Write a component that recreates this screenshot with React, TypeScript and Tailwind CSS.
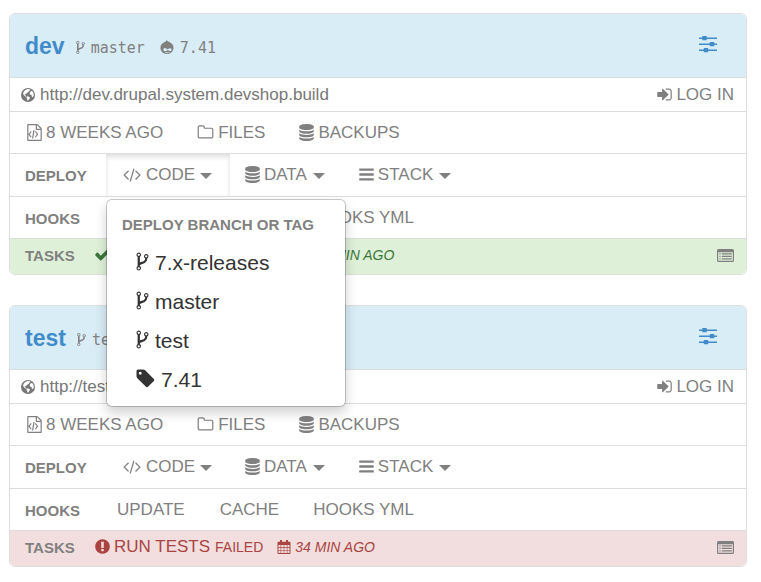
import React from "react";

const paths = {
  fork: "M672 1472q0-40-28-68t-68-28-68 28-28 68 28 68 68 28 68-28 28-68zm0-1152q0-40-28-68t-68-28-68 28-28 68 28 68 68 28 68-28 28-68zm640 128q0-40-28-68t-68-28-68 28-28 68 28 68 68 28 68-28 28-68zm96 0q0 52-26 96.500t-70 69.500q-2 287-226 414-67 38-203 81-128 40-169.500 71t-41.500 100v26q44 25 70 69.500t26 96.500q0 80-56 136t-136 56-136-56-56-136q0-52 26-96.500t70-69.500v-820q-44-25-70-69.500t-26-96.500q0-80 56-136t136-56 136 56 56 136q0 52-26 96.500t-70 69.500v497q54-26 154-57 55-17 87.500-29.500t70.500-31 59-39.500 40.500-51 28-69.500 8.500-91.500q-44-25-70-69.500t-26-96.500q0-80 56-136t136-56 136 56 56 136z",
  database: "M896 768q237 0 443-43t325-127v170q0 69-103 128t-280 93.500-385 34.500-385-34.500-280-93.500-103-128v-170q119 84 325 127t443 43zm0 768q237 0 443-43t325-127v170q0 69-103 128t-280 93.500-385 34.500-385-34.500-280-93.500-103-128v-170q119 84 325 127t443 43zm0-384q237 0 443-43t325-127v170q0 69-103 128t-280 93.500-385 34.500-385-34.500-280-93.500-103-128v-170q119 84 325 127t443 43zm0-1152q208 0 385 34.500t280 93.500 103 128v128q0 69-103 128t-280 93.500-385 34.500-385-34.500-280-93.500-103-128v-128q0-69 103-128t280-93.500 385-34.500z",
  bars: "M1664 1344v128q0 26-19 45t-45 19h-1408q-26 0-45-19t-19-45v-128q0-26 19-45t45-19h1408q26 0 45 19t19 45zm0-512v128q0 26-19 45t-45 19h-1408q-26 0-45-19t-19-45v-128q0-26 19-45t45-19h1408q26 0 45 19t19 45zm0-512v128q0 26-19 45t-45 19h-1408q-26 0-45-19t-19-45v-128q0-26 19-45t45-19h1408q26 0 45 19t19 45z",
  tag: "M576 448q0-53-37.500-90.500t-90.500-37.500-90.500 37.500-37.500 90.500 37.500 90.500 90.500 37.500 90.500-37.500 37.500-90.500zm1067 576q0 53-37 90l-491 492q-39 37-91 37-53 0-90-37l-715-716q-38-37-64.500-101t-26.500-117v-416q0-52 38-90t90-38h416q53 0 117 26.500t102 64.500l715 714q37 39 37 91z",
  signIn: "M1312 896q0 26-19 45l-544 544q-19 19-45 19t-45-19-19-45v-288h-448q-26 0-45-19t-19-45v-384q0-26 19-45t45-19h448v-288q0-26 19-45t45-19 45 19l544 544q19 19 19 45zm352-352v704q0 119-84.500 203.500t-203.500 84.500h-320q-13 0-22.500-9.500t-9.500-22.500q0-4-1-20t-.5-26.500 3-23.500 10-19.500 20.500-6.500h320q66 0 113-47t47-113v-704q0-66-47-113t-113-47h-312l-11.500-1-11.500-3-8-5.500-7-9-2-13.500q0-4-1-20t-.5-26.500 3-23.500 10-19.500 20.500-6.500h320q119 0 203.500 84.500t84.500 203.500z",
  folder: "M1600 1312v-704q0-40-28-68t-68-28h-704q-40 0-68-28t-28-68v-64q0-40-28-68t-68-28h-320q-40 0-68 28t-28 68v960q0 40 28 68t68 28h1216q40 0 68-28t28-68zm128-704v704q0 92-66 158t-158 66h-1216q-92 0-158-66t-66-158v-960q0-92 66-158t158-66h320q92 0 158 66t66 158v32h672q92 0 158 66t66 158z",
  code: "M681 1399l-50 50q-10 10-23 10t-23-10l-466-466q-10-10-10-23t10-23l466-466q10-10 23-10t23 10l50 50q10 10 10 23t-10 23l-393 393 393 393q10 10 10 23t-10 23zm591-1067l-373 1291q-4 13-15.500 19.500t-23.500 2.500l-62-17q-13-4-19.500-15.500t-2.500-24.500l373-1291q4-13 15.500-19.500t23.500-2.500l62 17q13 4 19.500 15.500t2.500 24.500zm657 651l-466 466q-10 10-23 10t-23-10l-50-50q-10-10-10-23t10-23l393-393-393-393q-10-10-10-23t10-23l50-50q10-10 23-10t23 10l466 466q10 10 10 23t-10 23z",
  fileCode: "M1596 380q28 28 48 76t20 88v1152q0 40-28 68t-68 28h-1344q-40 0-68-28t-28-68v-1600q0-40 28-68t68-28h896q40 0 88 20t76 48zm-444-244v376h376q-10-29-22-41l-313-313q-12-12-41-22zm384 1528v-1024h-416q-40 0-68-28t-28-68v-416h-768v1536h1280zm-1056-896q8-11 21-12.500t24 6.500l51 38q11 8 12.500 21t-6.500 24l-182 243 182 243q8 11 6.500 24t-12.500 21l-51 38q-11 8-24 6.500t-21-12.500l-226-301q-14-19 0-38zm802 301q14 19 0 38l-226 301q-8 11-21 12.500t-24-6.500l-51-38q-11-8-12.500-21t6.500-24l182-243-182-243q-8-11-6.500-24t12.500-21l51-38q11-8 24-6.500t21 12.500zm-620 461q-13-2-20.500-13t-5.500-24l138-831q2-13 13-20.500t24-5.500l63 10q13 2 20.500 13t5.500 24l-138 831q-2 13-13 20.500t-24 5.500z",
  check: "M1671 566q0 40-28 68l-724 724-136 136q-28 28-68 28t-68-28l-136-136-362-362q-28-28-28-68t28-68l136-136q28-28 68-28t68 28l294 295 656-657q28-28 68-28t68 28l136 136q28 28 28 68z",
  alert: "M896 128q209 0 385.500 103t279.500 279.500 103 385.500-103 385.500-279.500 279.500-385.500 103-385.500-103-279.500-279.500-103-385.500 103-385.500 279.500-279.500 385.500-103zm128 1247v-190q0-14-9-23.500t-22-9.500h-192q-13 0-23 10t-10 23v190q0 13 10 23t23 10h192q13 0 22-9.500t9-23.500zm-2-344l18-621q0-12-10-18-10-8-24-8h-220q-14 0-24 8-10 6-10 18l17 621q0 10 10 17.500t24 7.500h185q14 0 23.500-7.500t10.500-17.500z",
};

function Icon({ d, className, box = "0 0 1792 1792" }: { d: string; className: string; box?: string }) {
  return (
    <svg viewBox={box} className={`shrink-0 fill-current ${className}`} aria-hidden="true">
      <path d={d} />
    </svg>
  );
}

function Globe() {
  return (
    <svg viewBox="0 0 14 14" className="size-[14px] shrink-0" aria-hidden="true">
      <circle cx="7" cy="7" r="7" className="fill-current" />
      <path
        fill="white"
        d="M6.600 1.100l2.200.1.700.7-1 .6-.7 1.200-1.100.5-.6 1-1.100.2-.2.900-1-.1.200 1.100 1 .5.400.9-1-.2L2.700 7l-.6-1.700.7-1.800 1.600-1.500zM9.700 3.300l1.500-.2 1.300 2 .3 2.300-1.100 1.800-.9-.7-.2-1.500-1.300-.3-.7-1.500zM5.800 8.500l1.700.1 1.600 1.200-.8 1.300-1.200 1.500-.8-.2-.1-1.600-.8-1.200z"
      />
    </svg>
  );
}

function Drupal() {
  return (
    <svg viewBox="0 0 14 14" className="size-[14px] shrink-0" aria-hidden="true">
      <path className="fill-current" d="M6.700 0c.6 1.100 1.700 1.500 3.100 2.300 2 1.100 3.700 2.700 3.700 5.400 0 3.600-2.900 6.300-6.600 6.300S.4 11.400.4 7.800c0-2.900 2-4.500 4-5.500C5.600 1.700 6.400 1.200 6.700 0z" />
      <path fill="#d9edf7" d="M4.200 8.200c1.500-.4 2.300.8 3.300 1.200 1.100-.7 2.300-1.700 3.500-1 1.100.7.600 2.700-.7 2.700-1 0-1.700-.9-2.500-.8-1 .1-1.500 1.100-3.100.9-1.700-.3-1.800-2.500-.5-3zM5.500 12c1.300.6 2.900.6 4-.1l.2.600c-1.300.9-3.200.8-4.500.1z" />
    </svg>
  );
}

function Sliders() {
  return (
    <svg viewBox="0 0 18 17" className="h-[17px] w-[18px] fill-current" aria-hidden="true">
      <path d="M0 1.400h18v1.500H0zM0 7.400h18v1.500H0zM0 13.400h18v1.500H0z" />
      <path d="M3.300 0h4.400v4.300H3.300zM10.800 6h4.400v4.300h-4.400zM4.800 12h4.400v4.300H4.800z" />
    </svg>
  );
}

function ListIcon() {
  return (
    <svg viewBox="0 0 17 13" className="h-[13px] w-[17px]" aria-hidden="true">
      <path className="fill-current" fillRule="evenodd" d="M1.500 0h14A1.500 1.500 0 0117 1.500v10a1.500 1.500 0 01-1.500 1.500h-14A1.500 1.500 0 010 11.500v-10A1.500 1.500 0 011.500 0zM1.200 3.300v8.100l.4.400h13.800l.4-.4V3.300z" />
      <path className="fill-current" d="M2.400 4.200h1.200v1.400H2.400zM4.800 4.200h10v1.400h-10zM2.400 6.700h1.200v1.400H2.400zM4.800 6.700h10v1.400h-10zM2.400 9.200h1.200v1.400H2.400zM4.800 9.200h10v1.400h-10z" />
    </svg>
  );
}

function Calendar() {
  return (
    <svg viewBox="0 0 14 14" className="size-[14px] shrink-0" aria-hidden="true">
      <path className="fill-current" fillRule="evenodd" d="M1.500 1.800h11q1 0 1 1v10.200q0 1-1 1h-11q-1 0-1-1V2.800q0-1 1-1zM1.500 5v2.300h2.100V5zM4.200 5v2.300h2.500V5zM7.300 5v2.300h2.500V5zM10.400 5v2.300h2.100V5zM1.500 7.900v2.300h2.100V7.900zM4.200 7.900v2.300h2.500V7.900zM7.300 7.900v2.300h2.500V7.900zM10.400 7.900v2.300h2.100V7.900zM1.500 10.800V13h2.100v-2.200zM4.200 10.800V13h2.500v-2.200zM7.300 10.800V13h2.500v-2.200zM10.400 10.800V13h2.100v-2.200z" />
      <path className="fill-current" d="M3 0h2v3.600H3zM9 0h2v3.600H9z" />
    </svg>
  );
}

const Caret = () => <span className="mt-[2px] border-x-6 border-t-6 border-x-transparent border-t-current" />;

function RowLabel({ children }: { children: React.ReactNode }) {
  return <h3 className="w-24 shrink-0 pt-[2px] pl-[15px] text-[15px] leading-5 font-bold">{children}</h3>;
}

function DeployMenu() {
  const branches = ["7.x-releases", "master", "test"];
  return (
    <div className="absolute top-[45px] left-0 z-10 w-[240px] rounded-[6px] border border-black/20 bg-white bg-clip-padding pt-[15px] pb-[7px] whitespace-nowrap shadow-[0_6px_12px_rgba(0,0,0,0.18)]">
      <h4 className="mb-2 pl-[15px] text-[15px] leading-5 font-bold">DEPLOY BRANCH OR TAG</h4>
      <ul className="text-[21px] leading-[39px] text-[#333]">
        {branches.map((name) => (
          <li key={name}>
            <a href="#" className="flex h-[39px] items-center pl-[29px]">
              <Icon d={paths.fork} box="384 0 1024 1792" className="mr-[6px] mb-[2px] h-[21px] w-[13px]" />
              {name}
            </a>
          </li>
        ))}
        <li>
          <a href="#" className="flex h-[39px] items-center pl-7">
            <Icon d={paths.tag} className="mr-[5px] mb-[2px] size-[21px]" />
            7.41
          </a>
        </li>
      </ul>
    </div>
  );
}

type Env = { name: string; branch: string; version: string; url: string; failed: boolean; open: boolean };

function EnvironmentCard({ env }: { env: Env }) {
  const task = env.failed ? "bg-[#f2dede] text-[#a94442]" : "bg-[#dff0d8] text-[#3c763d]";
  return (
    <section className="rounded-[6px] border border-[#ddd] bg-white text-[17px] leading-5 text-[#808080]">
      <header className="flex h-16 items-center rounded-t-[5px] border-b border-[#ddd] bg-[#d9edf7] pr-[29px] pl-[15px]">
        <h2 className="text-[23px] leading-8 font-bold">
          <a href="#" className="text-[#428bca]">{env.name}</a>
        </h2>
        <a href="#" className="mt-[5px] ml-[11px] flex items-center font-['DejaVu_Sans_Mono',monospace] text-[15px]">
          <Icon d={paths.fork} box="384 0 1024 1792" className="mr-[6px] mb-[2px] h-[15px] w-[9px]" />
          {env.branch}
        </a>
        <a href="#" className="mt-[5px] ml-[15px] flex items-center gap-[6px] font-['DejaVu_Sans_Mono',monospace] text-[15px]">
          <span className="mb-[2px]"><Drupal /></span>
          {env.version}
        </a>
        <button type="button" aria-label="Environment settings" className="mb-[3px] ml-auto text-[#428bca]">
          <Sliders />
        </button>
      </header>

      <div className="flex h-[34px] items-center justify-between border-b border-[#ddd] pr-3 pl-[11px]">
        <a href="#" className="flex items-center gap-[5px] text-[#777]">
          <Globe />
          {env.url}
        </a>
        <a href="#" className="flex items-center gap-[3px]">
          <Icon d={paths.signIn} className="size-[17px]" />
          LOG IN
        </a>
      </div>

      <nav className="flex h-[42px] items-center border-b border-[#ddd] pl-4">
        <a href="#" className="flex items-center gap-[3px]">
          <Icon d={paths.fileCode} className="size-[17px]" />
          8 WEEKS AGO
        </a>
        <a href="#" className="ml-[34px] flex items-center gap-1">
          <Icon d={paths.folder} className="size-[17px]" />
          FILES
        </a>
        <a href="#" className="ml-[33px] flex items-center gap-[3px]">
          <Icon d={paths.database} className="size-[17px]" />
          BACKUPS
        </a>
      </nav>

      <div className="flex h-[43px] items-center border-b border-[#ddd]">
        <RowLabel>DEPLOY</RowLabel>
        <div className="relative h-full">
          <button
            type="button"
            aria-expanded={env.open}
            className={`flex h-full w-[124px] items-center gap-[5px] pb-px pl-[17px] ${env.open ? "shadow-[inset_0_3px_5px_rgba(0,0,0,0.125)]" : ""}`}
          >
            <Icon d={paths.code} box="109 0 1820 1792" className="h-[17px] w-[18px]" />
            CODE
            <Caret />
          </button>
          {env.open && <DeployMenu />}
        </div>
        <button type="button" className="ml-[14px] flex items-center gap-[3px] pb-px">
          <Icon d={paths.database} className="size-[17px]" />
          DATA
          <span className="ml-[3px] flex"><Caret /></span>
        </button>
        <button type="button" className="ml-[33px] flex items-center gap-[3px] pb-px">
          <Icon d={paths.bars} className="size-[17px]" />
          STACK
          <span className="ml-[3px] flex"><Caret /></span>
        </button>
      </div>

      <div className="flex h-[42px] items-center border-b border-[#ddd]">
        <RowLabel>HOOKS</RowLabel>
        <a href="#" className="ml-[11px]">UPDATE</a>
        <a href="#" className="ml-[35px]">CACHE</a>
        <a href="#" className="ml-[34px]">HOOKS YML</a>
      </div>

      <div className={`flex h-[35px] items-center rounded-b-[5px] pr-3 pb-[2px] ${task}`}>
        <h3 className="w-[84px] shrink-0 pl-[15px] text-[15px] leading-5 font-bold text-[#808080]">TASKS</h3>
        <a href="#" className="flex items-center pb-[2px]">
          <Icon d={env.failed ? paths.alert : paths.check} className="mr-[3px] size-[17px]" />
          RUN TESTS
          <span className="ml-[5px] pt-px text-[14px]">{env.failed ? "FAILED" : "SUCCESS"}</span>
          <span className="ml-[14px] flex items-center gap-[4px] pt-px text-[14px] italic">
            <Calendar />
            34 MIN AGO
          </span>
        </a>
        <button type="button" aria-label="Task list" className="ml-auto text-[#808080]">
          <ListIcon />
        </button>
      </div>
    </section>
  );
}

const environments: Env[] = [
  { name: "dev", branch: "master", version: "7.41", url: "http://dev.drupal.system.devshop.build", failed: false, open: true },
  { name: "test", branch: "test", version: "7.41", url: "http://test.drupal.system.devshop.build", failed: true, open: false },
];

export default function App() {
  return (
    <main className="flex flex-col gap-[30px] bg-white pt-[13px] pr-[14px] pb-[15px] pl-[9px] font-['Liberation_Sans',Arial,sans-serif]">
      {environments.map((env) => (
        <EnvironmentCard key={env.name} env={env} />
      ))}
    </main>
  );
}
